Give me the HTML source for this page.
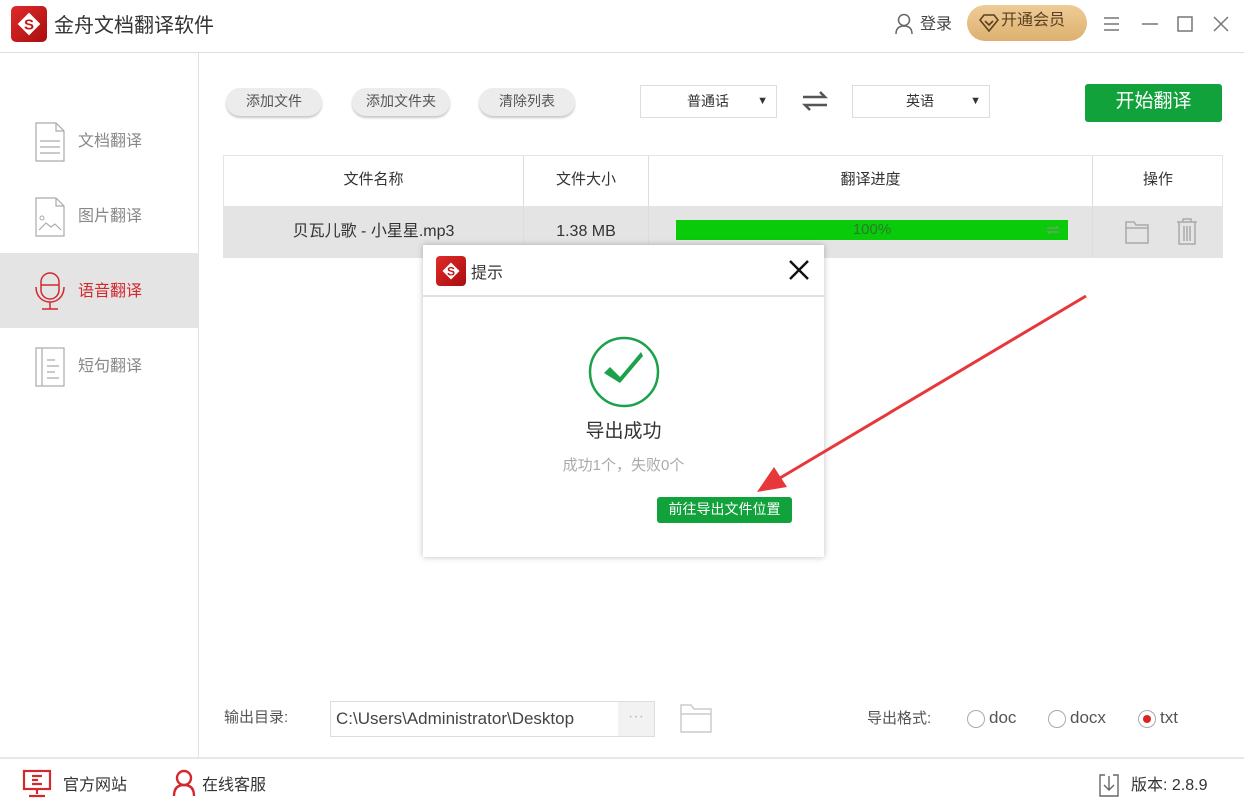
<!DOCTYPE html>
<html><head><meta charset="utf-8"><style>
*{margin:0;padding:0;box-sizing:border-box}
body{width:1244px;height:804px;position:relative;background:#fff;font-family:"Liberation Sans","Noto Sans CJK SC",sans-serif;color:#333;overflow:hidden}
.a{position:absolute}
.btn{position:absolute;top:88px;height:28px;border-radius:14px;background:#ececec;box-shadow:0 2px 2px #c8c8c8;font-size:14px;color:#555;text-align:center;line-height:26px}
.sel{position:absolute;top:85px;height:33px;border:1px solid #ddd;font-size:14px;color:#333;line-height:31px}
.nav{position:absolute;left:0;width:198px;height:75px;font-size:16px;color:#888}
.nav span{position:absolute;left:78px;top:24px}
.nav svg{position:absolute;left:34px;top:18px}
.th{position:absolute;top:156px;height:50px;line-height:48px;text-align:center;font-size:15px;color:#333}
.td{position:absolute;top:206px;height:50px;line-height:48px;text-align:center;font-size:16px;color:#333}
.radio{display:inline-block;width:18px;height:18px;border:1px solid #aaa;border-radius:50%;vertical-align:middle;position:relative;margin-right:4px}
</style></head><body>
<div class="a" style="left:11px;top:6px;width:36px;height:36px;border-radius:5px;background:linear-gradient(135deg,#e02a2a,#a80e0e)"></div>
<svg class="a" style="left:11px;top:6px" width="36" height="36"><rect x="10" y="10" width="16" height="16" fill="#fff" transform="rotate(45 18 18)"/><text x="18" y="23.5" font-size="15" font-weight="bold" text-anchor="middle" fill="#c01818" font-family="Liberation Sans">S</text></svg>
<div class="a" style="left:54px;top:9px;font-size:20px;color:#333">金舟文档翻译软件</div>
<svg class="a" style="left:894px;top:13px" width="20" height="22"><circle cx="10" cy="7" r="5.5" fill="none" stroke="#666" stroke-width="1.5"/><path d="M2 21c0-6 3.5-8 8-8s8 2 8 8" fill="none" stroke="#666" stroke-width="1.5"/></svg>
<div class="a" style="left:920px;top:10px;font-size:16px;color:#444">登录</div>
<div class="a" style="left:967px;top:5px;width:120px;height:36px;border-radius:18px;background:linear-gradient(#eecc96,#ddb070);font-size:16px;color:#5a4020;line-height:32px;padding-left:34px">开通会员</div>
<svg class="a" style="left:979px;top:14px" width="20" height="18"><path d="M5 1h10l4 5-9 11L1 6z" fill="none" stroke="#5a4020" stroke-width="1.6"/><path d="M6 7l4 4 4-4" fill="none" stroke="#5a4020" stroke-width="1.6"/></svg>
<svg class="a" style="left:1100px;top:14px" width="130" height="20"><path d="M4 4h15M4 10h15M4 16h15" stroke="#777" stroke-width="1.4"/><path d="M42 10h16" stroke="#777" stroke-width="1.5"/><rect x="78" y="3" width="14" height="14" fill="none" stroke="#777" stroke-width="1.5"/><path d="M114 3l14 14M128 3l-14 14" stroke="#777" stroke-width="1.5"/></svg>
<div class="a" style="left:0;top:52px;width:1244px;height:1px;background:#ddd"></div>
<div class="a" style="left:198px;top:53px;width:1px;height:704px;background:#e2e2e2"></div>
<div class="nav" style="top:103px"><svg width="32" height="42"><path d="M2 2h20l8 8v30H2z" fill="none" stroke="#aaa" stroke-width="1.2"/><path d="M22 2v8h8M6 20h20M6 26h20M6 32h20" fill="none" stroke="#aaa" stroke-width="1.2"/></svg><span>文档翻译</span></div>
<div class="nav" style="top:178px"><svg width="32" height="42"><path d="M2 2h20l8 8v30H2z" fill="none" stroke="#aaa" stroke-width="1.2"/><path d="M22 2v8h8M5 34l7-7 5 4 4-3 6 6" fill="none" stroke="#aaa" stroke-width="1.2"/><circle cx="8" cy="22" r="2" fill="none" stroke="#aaa"/></svg><span>图片翻译</span></div>
<div class="nav" style="top:253px;background:#e4e4e4;color:#d2282e"><svg width="34" height="42"><rect x="7" y="2" width="18" height="26" rx="9" fill="none" stroke="#d2282e" stroke-width="1.5"/><path d="M7 14h18M2 16c0 10 7 15 14 15s14-5 14-15M16 31v7M8 38h16" fill="none" stroke="#d2282e" stroke-width="1.5"/></svg><span>语音翻译</span></div>
<div class="nav" style="top:328px"><svg width="32" height="42"><rect x="2" y="2" width="28" height="38" fill="none" stroke="#aaa" stroke-width="1.2"/><path d="M8 2v38M13 14h8M13 20h12M13 26h8M13 32h12" stroke="#aaa" stroke-width="1.2"/></svg><span>短句翻译</span></div>
<div class="btn" style="left:226px;width:96px">添加文件</div>
<div class="btn" style="left:352px;width:98px">添加文件夹</div>
<div class="btn" style="left:479px;width:96px">清除列表</div>
<div class="sel" style="left:640px;width:137px"><span style="position:absolute;left:46px">普通话</span><span style="position:absolute;right:8px;font-size:11px">▼</span></div>
<svg class="a" style="left:801px;top:90px" width="28" height="22"><path d="M2 7h22l-5-5M26 15H4l5 5" fill="none" stroke="#555" stroke-width="2.5"/></svg>
<div class="sel" style="left:852px;width:138px"><span style="position:absolute;left:53px">英语</span><span style="position:absolute;right:8px;font-size:11px">▼</span></div>
<div class="a" style="left:1085px;top:84px;width:137px;height:38px;background:#12a23c;border-radius:3px;color:#fff;font-size:19px;text-align:center;line-height:36px">开始翻译</div>
<div class="a" style="left:223px;top:155px;width:1000px;height:103px;border:1px solid #e4e4e4"></div>
<div class="a" style="left:224px;top:206px;width:998px;height:51px;background:#e4e4e4"></div>
<div class="a" style="left:523px;top:156px;width:1px;height:101px;background:#ddd"></div>
<div class="a" style="left:648px;top:156px;width:1px;height:101px;background:#ddd"></div>
<div class="a" style="left:1092px;top:156px;width:1px;height:101px;background:#ddd"></div>
<div class="th" style="left:224px;width:299px">文件名称</div>
<div class="th" style="left:524px;width:124px">文件大小</div>
<div class="th" style="left:649px;width:443px">翻译进度</div>
<div class="th" style="left:1093px;width:130px">操作</div>
<div class="td" style="left:224px;width:299px;top:208px">贝瓦儿歌 - 小星星.mp3</div>
<div class="td" style="left:524px;width:124px;top:208px">1.38 MB</div>
<div class="a" style="left:676px;top:220px;width:392px;height:20px;background:#0acb0a;text-align:center;font-size:15px;line-height:19px;color:#2a7a2a">100%</div>
<svg class="a" style="left:1045px;top:224px" width="16" height="12"><path d="M2 4h11l-2-2M14 8H3l2 2" fill="none" stroke="#6aa36a" stroke-width="1.5"/></svg>
<svg class="a" style="left:1124px;top:218px" width="28" height="28"><path d="M2 4h8l2 3h12v18H2z M2 10h22" fill="none" stroke="#aaa" stroke-width="1.5"/></svg>
<svg class="a" style="left:1175px;top:216px" width="24" height="30"><path d="M2 6h20M8 6V3h8v3M4 6v22h16V6M9 10v15M12 10v15M15 10v15" fill="none" stroke="#aaa" stroke-width="1.5"/></svg>
<div class="a" style="left:423px;top:245px;width:401px;height:312px;background:#fff;box-shadow:0 0 6px rgba(0,0,0,.25)"></div>
<div class="a" style="left:423px;top:295px;width:401px;height:2px;background:#e0e0e0"></div>
<div class="a" style="left:436px;top:256px;width:30px;height:30px;border-radius:4px;background:linear-gradient(135deg,#e02a2a,#a80e0e)"></div>
<svg class="a" style="left:436px;top:256px" width="30" height="30"><rect x="9" y="9" width="12" height="12" fill="#fff" transform="rotate(45 15 15)"/><text x="15" y="19.5" font-size="12" font-weight="bold" text-anchor="middle" fill="#c01818">S</text></svg>
<div class="a" style="left:471px;top:259px;font-size:16px;color:#333">提示</div>
<svg class="a" style="left:788px;top:259px" width="22" height="22"><path d="M2 2l18 18M20 2L2 20" stroke="#111" stroke-width="2.4"/></svg>
<svg class="a" style="left:587px;top:335px" width="74" height="74"><circle cx="37" cy="37" r="34" fill="none" stroke="#1aa14a" stroke-width="2.5"/><path d="M17 38l6-6 10 10 21-25 2 4-23 27z" fill="#1aa14a"/></svg>
<div class="a" style="left:423px;top:416px;width:401px;text-align:center;font-size:19px;color:#333">导出成功</div>
<div class="a" style="left:423px;top:454px;width:401px;text-align:center;font-size:15px;color:#aaa">成功1个，失败0个</div>
<div class="a" style="left:657px;top:497px;width:135px;height:26px;background:#12a23c;border-radius:3px;color:#fff;font-size:14px;text-align:center;line-height:25px">前往导出文件位置</div>
<svg class="a" style="left:0;top:0" width="1244" height="804"><line x1="1086" y1="296" x2="780" y2="478" stroke="#e8373a" stroke-width="3"/><path d="M757 492l17-25 13 20z" fill="#e8373a"/></svg>
<div class="a" style="left:224px;top:706px;font-size:15px;color:#555">输出目录:</div>
<div class="a" style="left:330px;top:701px;width:325px;height:36px;border:1px solid #ddd;font-size:17px;color:#444;line-height:34px;padding-left:5px">C:\Users\Administrator\Desktop</div>
<div class="a" style="left:618px;top:702px;width:36px;height:34px;background:#f2f2f2;color:#bbb;text-align:center;line-height:30px">···</div>
<svg class="a" style="left:679px;top:702px" width="34" height="32"><path d="M2 3h10l3 4h17v23H2z M2 12h30" fill="none" stroke="#ccc" stroke-width="1.5"/></svg>
<div class="a" style="left:867px;top:707px;font-size:15px;color:#555">导出格式:</div>
<div class="a" style="left:967px;top:708px;font-size:17px;color:#555"><span class="radio"></span>doc</div>
<div class="a" style="left:1048px;top:708px;font-size:17px;color:#555"><span class="radio"></span>docx</div>
<div class="a" style="left:1138px;top:708px;font-size:17px;color:#555"><span class="radio"><span style="position:absolute;left:4px;top:4px;width:8px;height:8px;border-radius:50%;background:#d22"></span></span>txt</div>
<div class="a" style="left:0;top:757px;width:1244px;height:2px;background:#e8e8e8"></div>
<svg class="a" style="left:22px;top:769px" width="32" height="30"><rect x="2" y="2" width="26" height="18" fill="none" stroke="#d2282e" stroke-width="2.2"/><path d="M10 7h10M10 11h6M10 15h10M15 20v5M7 27h16" stroke="#d2282e" stroke-width="2.2"/></svg>
<div class="a" style="left:63px;top:771px;font-size:16px;color:#333">官方网站</div>
<svg class="a" style="left:172px;top:769px" width="24" height="28"><circle cx="12" cy="9" r="7" fill="none" stroke="#d2282e" stroke-width="2.4"/><path d="M2 27c0-8 4-11 10-11s10 3 10 11" fill="none" stroke="#d2282e" stroke-width="2.4"/></svg>
<div class="a" style="left:202px;top:771px;font-size:16px;color:#333">在线客服</div>
<svg class="a" style="left:1098px;top:772px" width="22" height="26"><path d="M7 3H2v21h18V3h-5M11 4v14M6 13l5 5 5-5" fill="none" stroke="#666" stroke-width="1.4"/></svg>
<div class="a" style="left:1131px;top:771px;font-size:16px;color:#333">版本: 2.8.9</div>
</body></html>
